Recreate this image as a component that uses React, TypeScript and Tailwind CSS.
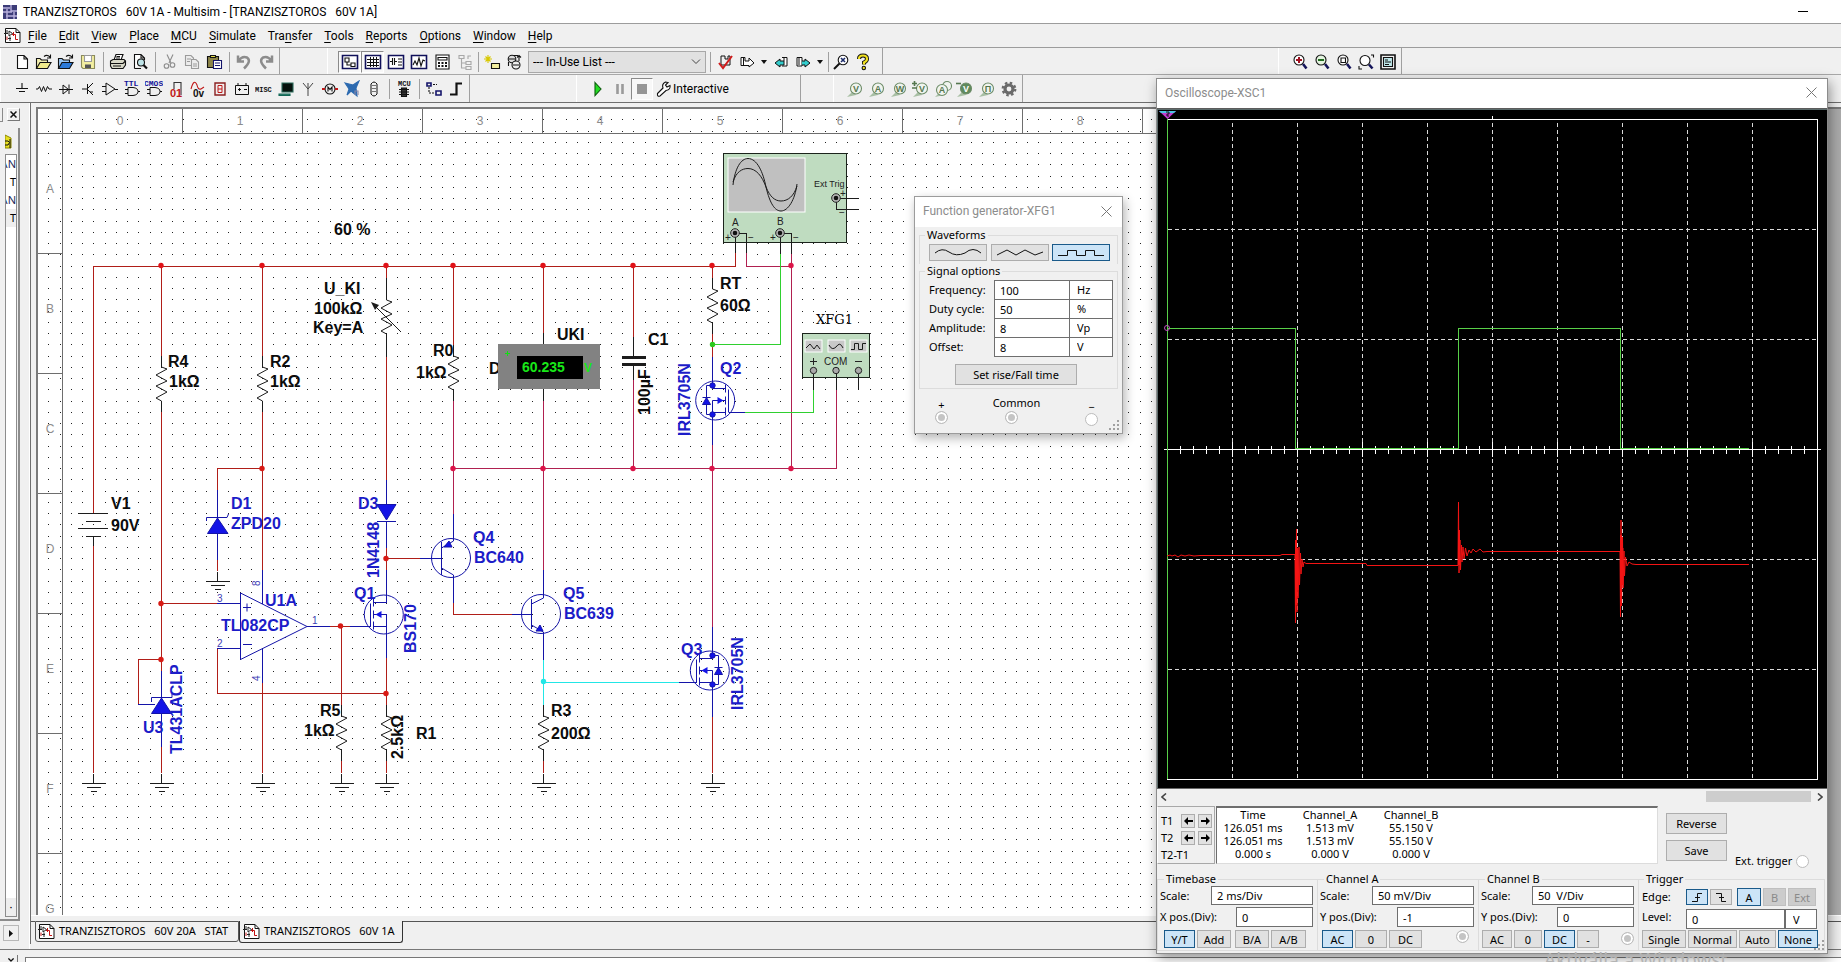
import React from "react";

type Kids = { children?: React.ReactNode };

const RED = "#b01e18";
const CRIM = "#b02050";
const GREEN = "#2fd02f";
const BLUE = "#1414a8";
const INK = "#1c1c1c";
const CYAN = "#22e6e6";

/* ---------- toolbar parts ---------- */

function Glyph({ children, size = 18 }: Kids & { size?: number }) {
  return (
    <svg width={size} height={size} viewBox="0 0 18 18" fill="none" stroke="#111" strokeWidth="1.1" aria-hidden="true">
      {children}
    </svg>
  );
}

function Tool({ label, children, pressed, wide }: Kids & { label: string; pressed?: boolean; wide?: boolean }) {
  return (
    <button
      type="button"
      aria-label={label}
      className={
        "flex h-[22px] flex-none items-center justify-center " +
        (wide ? "w-[23px] " : "w-[22px] ") +
        (pressed ? "border border-[#8a8a8a] border-r-white border-b-white bg-[#f8f8f8]" : "")
      }
    >
      <Glyph>{children}</Glyph>
    </button>
  );
}

function Sep({ tight }: { tight?: boolean }) {
  return <div className={"h-[20px] w-px flex-none bg-[#a0a0a0] " + (tight ? "ml-0.5 mr-px" : "ml-1 mr-[3px]")} />;
}

function Caret() {
  return (
    <button type="button" aria-label="More" className="flex h-[22px] w-[12px] flex-none items-center justify-center">
      <svg width="6" height="4" viewBox="0 0 6 4" aria-hidden="true">
        <path d="M0 0H6L3 4Z" fill="#111" />
      </svg>
    </button>
  );
}

function Band({ children, className }: Kids & { className: string }) {
  return (
    <div className={"flex flex-none items-center border-r border-l border-r-[#a0a0a0] border-l-white pl-[10px] " + className}>
      {children}
    </div>
  );
}

function SheetIcon({ size = 17 }: { size?: number }) {
  return (
    <svg width={size} height={size} viewBox="0 0 17 17" fill="none" className="flex-none" aria-hidden="true">
      <path d="M1.5 1.5H12L16 5.500V15.500H1.500Z" fill="#fff" stroke="#111" />
      <path d="M12 1.500V5.500H16" stroke="#111" />
      <path d="M0 6.500H4M5 4V9L8.500 6.500ZM4 11.500H7M6 9.500V14M3 3V6" stroke="#222" />
      <path d="M8 7.500H11.500V12.500H14M9.500 5V9M3 9.500V13" stroke="#c41414" />
    </svg>
  );
}

const menus: [string, string, string][] = [
  ["", "F", "ile"], ["", "E", "dit"], ["", "V", "iew"], ["", "P", "lace"], ["", "M", "CU"], ["", "S", "imulate"],
  ["Tra", "n", "sfer"], ["", "T", "ools"], ["", "R", "eports"], ["", "O", "ptions"], ["", "W", "indow"], ["", "H", "elp"],
];

function StandardTools() {
  return (
    <>
      <Band className="w-[280px] pt-0.5">
        <Tool label="New"><path d="M4.500 2.500H11L14.500 6V15.500H4.500ZM11 2.500V6H14.500" fill="#fff" /></Tool>
        <Tool label="Open">
          <path d="M1.500 15V5.500H5L6.500 7H12.500V9" fill="#f4f0b0" />
          <path d="M1.500 15.500L5 9.500H16L12.500 15.500Z" fill="#f2ec8c" />
          <path d="M9 3.500Q12 1 15 4M15.500 1.500V5H12" />
        </Tool>
        <Tool label="Open samples">
          <path d="M1.500 15V5.500H5L6.500 7H12.500V9" fill="#9cc8f4" />
          <path d="M1.500 15.500L5 9.500H16L12.500 15.500Z" fill="#2c7ad8" />
          <path d="M9 3.500Q12 1 15 4M15.500 1.500V5H12" />
        </Tool>
        <Tool label="Save">
          <path d="M2.500 2.500H15.500V15.500H4L2.500 14Z" fill="#f2eea0" stroke="#8a8a5a" />
          <path d="M5.500 2.500H12.500V8.500H5.500Z" fill="#fff" stroke="#999" />
          <path d="M6 11.500H12V15H6Z" fill="#555" stroke="none" />
        </Tool>
        <Sep />
        <Tool label="Print">
          <path d="M5 7L7 1.500H14L12 7" fill="#fff" />
          <path d="M1.500 8L4 6.500H15L16.500 8V12L14 15.500H3L1.500 13Z" fill="#d8d8c8" />
          <path d="M1.500 10.500H14L16.500 8M4 13H12M7.500 3.500H11M7 5H11" />
        </Tool>
        <Tool label="Print preview">
          <path d="M3.500 15.500V1.500H10L13.500 5V7M3.500 15.500H10M10 1.500V5H13.500" fill="#fff" />
          <circle cx="10" cy="9.500" r="3.500" fill="#bfe4e8" />
          <path d="M12.500 12L16 15.500" strokeWidth="2.200" />
        </Tool>
        <Sep />
        <Tool label="Cut">
          <g stroke="#8c8c8c"><path d="M6 1.500L10 10M12 1.500L8 10" /><circle cx="5.500" cy="13" r="2.300" /><circle cx="11.500" cy="12" r="2.300" /></g>
        </Tool>
        <Tool label="Copy">
          <g stroke="#9a9a9a" fill="#ececec"><path d="M2.500 2.500H8L10.500 5V12.500H2.500Z" /><path d="M8.500 6.500H13L15.500 9V15.500H8.500Z" /><path d="M4 6H8M4 8.500H7M10 11H14M10 13H14" /></g>
        </Tool>
        <Tool label="Paste">
          <path d="M2.500 3.500H13.500V14.500H2.500Z" fill="#8c8448" /><path d="M5.500 4.500V2.500H10.500V4.500Z" fill="#e8e04a" />
          <path d="M8.500 7.500H16.500V15.500H8.500Z" fill="#fff" stroke="#14146a" /><path d="M10 10H15M10 12.500H15" stroke="#14146a" />
        </Tool>
        <Sep />
        <Tool label="Undo"><path d="M3 2.500V8.500H9M3.500 8Q7 2.500 12 4.500Q17 8 9 15.500" stroke="#8c8c8c" strokeWidth="2.500" /></Tool>
        <Tool label="Redo"><path d="M15 2.500V8.500H9M14.500 8Q11 2.500 6 4.500Q1 8 9 15.500" stroke="#8c8c8c" strokeWidth="2.500" /></Tool>
      </Band>
      <Band className="ml-[47px] w-[556px] pt-0.5">
        <Tool wide pressed label="Design toolbox"><path d="M1.500 2.500H16.500V15.500H1.500Z" fill="#fff" stroke="#10105a" strokeWidth="1.600" /><path d="M4 5H8V9H4ZM10 10H14V13.500H10ZM6 9V12H10" /></Tool>
        <Tool wide pressed label="Spreadsheet view"><path d="M1.500 2.500H16.500V15.500H1.500Z" fill="#fff" stroke="#10105a" strokeWidth="1.600" /><path d="M3 6.500H15M3 9.500H15M3 12.500H15M6.500 4V14M9.500 4V14M12.500 4V14" strokeWidth="1" /></Tool>
        <Tool wide label="SPICE netlist"><path d="M1.500 2.500H16.500V15.500H1.500Z" fill="#fff" stroke="#10105a" strokeWidth="1.600" /><path d="M3 8.500H5M5.500 5V12M7.500 5V12M8 8.500H10M11 6H15M11 9H15M11 12H15" /></Tool>
        <Tool wide label="Grapher"><path d="M1.500 2.500H16.500V15.500H1.500Z" fill="#fff" stroke="#10105a" strokeWidth="1.600" /><path d="M3 12L5 8L7 12L9 5L11 13L13 7L15 8" /></Tool>
        <Tool wide label="Postprocessor"><path d="M3 2H16V16H3Z" fill="#fff" /><path d="M5 4.500H14V7H5Z" /><path d="M5 10H7M8.500 10H10.500M12 10H14M5 13H7M8.500 13H10.500M12 13H14" strokeWidth="1.800" /></Tool>
        <Tool wide label="Parent sheet"><g stroke="#a8a8a8"><path d="M3 2.500H8V5.500H3ZM10 8.500H15V11.500H10ZM10 13.500H15V16.500H10ZM5.500 6V15H10M5.500 10H10M12 6V3H15" /></g></Tool>
        <Sep tight />
        <Tool wide label="Component wizard"><path d="M5 2V10M1 6H9M2.500 3.500L7.500 8.500M7.500 3.500L2.500 8.500" stroke="#d8c800" /><path d="M8.500 10.500H16.500V15.500H8.500Z" fill="#f2eea0" /></Tool>
        <Tool wide label="Database manager"><circle cx="6" cy="6" r="3.800" fill="#ddd" /><circle cx="10" cy="12" r="4" fill="#eee" /><path d="M3 6H9M7 12H13M13 8V3M11 4.500L13 2.500L15 4.500M2.500 9V13M8 2.500H12" /></Tool>
        <select aria-label="In-use list" className="ml-[2px] h-[22px] w-[178px] flex-none appearance-none border border-[#a8a8a8] bg-[#e1e1e1] pl-1 font-['Roboto',sans-serif] text-[12px] leading-5 text-black">
          <option>--- In-Use List ---</option>
        </select>
        <div className="pointer-events-none -ml-[15px] mr-[5px] flex w-[10px] flex-none items-center">
          <svg width="10" height="6" viewBox="0 0 10 6" fill="none" stroke="#444" aria-hidden="true"><path d="M1 .5L5 4.500L9 .5" /></svg>
        </div>
        <Sep />
        <Tool label="Electrical rules check"><path d="M5 3H9V6H12V3H14V12H5Z" strokeWidth="1" /><path d="M3 10L7 15L16 3" stroke="#d01c1c" strokeWidth="2" /></Tool>
        <Tool label="Transfer to layout"><path d="M3 4.500H7V8H11V5L16 10L11 14V12.500H3ZM5.500 4V12" strokeWidth="1" fill="#fff" /></Tool>
        <Caret />
        <Tool label="Back annotate"><path d="M10 4.500H15V13H10" fill="#fff" strokeWidth="1" /><path d="M12 4V12H8V14L3 10L8 6V8H12" strokeWidth="1" fill="#3cc" /></Tool>
        <Tool label="Forward annotate"><path d="M3 4.500H8V13H3Z" fill="#fff" strokeWidth="1" /><path d="M5 4V12M8 8H11V6L16 10L11 14V12H8" strokeWidth="1" fill="#3cc" /></Tool>
        <Caret />
        <Sep tight />
        <Tool label="Find examples"><circle cx="11" cy="7" r="4.800" fill="#fff" /><path d="M9 5L13 9M13 5L9 9" stroke="#1c2c6a" strokeWidth="1.600" /><path d="M7.500 10.500L2 16" strokeWidth="2" /></Tool>
        <Tool label="Help">
          <path d="M5 6Q5 2.500 9 2.500Q13 2.500 13 6Q13 8 10 9.500V11.500" strokeWidth="4" /><path d="M5 6Q5 2.500 9 2.500Q13 2.500 13 6Q13 8 10 9.500V11.500" stroke="#f0e020" strokeWidth="2.200" />
          <circle cx="9.800" cy="15" r="1.700" fill="#f0e020" />
        </Tool>
      </Band>
      <Band className="ml-[395px] w-[124px] pt-0.5">
        <Tool label="Zoom in"><circle cx="8" cy="7" r="5" fill="#fff" /><path d="M5 7H11M8 4V10" stroke="#a01020" strokeWidth="2" /><path d="M12 11L15.500 15.500" stroke="#14145a" strokeWidth="2.600" /></Tool>
        <Tool label="Zoom out"><circle cx="8" cy="7" r="5" fill="#e4f4e0" /><path d="M5 7H11" stroke="#206a20" strokeWidth="2" /><path d="M12 11L15.500 15.500" stroke="#14145a" strokeWidth="2.600" /></Tool>
        <Tool label="Zoom area"><circle cx="8" cy="7" r="5" fill="#fff" /><path d="M6 5H10.500V9.500H6Z" /><path d="M12 11L15.500 15.500" stroke="#14145a" strokeWidth="2.600" /></Tool>
        <Tool label="Zoom sheet"><circle cx="8" cy="7.500" r="5" fill="#fff" /><path d="M14 2H16.500V4.500M2 13V16H5" /><path d="M12 11.500L15.500 15.500" stroke="#14145a" strokeWidth="2.600" /></Tool>
        <Tool label="Full screen"><path d="M2 2H16V16H2Z" strokeWidth="1.600" /><path d="M4.500 4.500H13.500V13.500H4.500Z" fill="#bfe8ea" /><path d="M6 7H9M6 9H12M6 11.500H10" /></Tool>
      </Band>
    </>
  );
}

function Probe({ label, mark, solid, second, sign }: { label: string; mark: string; solid?: boolean; second?: boolean; sign?: string }) {
  return (
    <Tool label={label}>
      <path d="M1 17L7 11L10 15Z" fill="#a8bfa4" stroke="none" />
      {second && <circle cx="13" cy="6" r="4.500" fill="#f0f4ee" stroke="#6d8c68" />}
      <circle cx={second ? 8 : 10} cy={second ? 10 : 8.5} r="5.500" fill={solid ? "#5f8a5c" : "#f0f4ee"} stroke="#6d8c68" />
      <text x={second ? 8 : 10} y={second ? 13 : 11.5} textAnchor="middle" stroke="none" fill={solid ? "#fff" : "#55774f"} className="font-['Liberation_Sans',sans-serif] text-[9px] font-bold">{mark}</text>
      {sign && <path d={sign} stroke="#55774f" strokeWidth="1.600" />}
    </Tool>
  );
}

function ComponentTools() {
  return (
    <>
      <Band className="w-[470px]">
        <Tool label="Source"><path d="M9 3V8M3 8.500H15M6 11.500H12" /></Tool>
        <Tool label="Basic"><path d="M1 9H3L4.500 6.500L6.500 11.500L8.500 6.500L10.500 11.500L12.500 6.500L14 9H17" strokeWidth="1" /></Tool>
        <Tool label="Diode"><path d="M2 9.500H16M6 5V14L11.500 9.500ZM12 4.500V14" strokeWidth="1" /></Tool>
        <Tool label="Transistor"><path d="M3 9H8M8.500 4V14M9 8L14 3M9 10L14 15M11 12H14" strokeWidth="1" /></Tool>
        <Tool label="Analog"><path d="M5 3V15L14 9ZM1 6.500H5M1 11.500H5M14 9.500H17" strokeWidth="1" /></Tool>
        <Tool label="TTL"><text x="1" y="5.500" stroke="none" fill="#14149a" className="font-['Liberation_Mono',monospace] text-[8px] font-bold">TTL</text><path d="M5 7.500H10Q15 8 15 11.500Q15 15 10 15.500H5ZM2 9.500H5M2 13.500H5M15 11.500H17" strokeWidth="1" /></Tool>
        <Tool label="CMOS"><text x="-1" y="5.500" stroke="none" fill="#14149a" className="font-['Liberation_Mono',monospace] text-[8px] font-bold">CMOS</text><path d="M5 7.500H10Q15 8 15 11.500Q15 15 10 15.500H5ZM2 9.500H5M2 13.500H5M15 11.500H17" strokeWidth="1" /></Tool>
        <Tool label="Misc digital"><path d="M7 9V2.500H14V15" stroke="#333" /><text x="3" y="17" stroke="none" fill="#c01818" className="font-['Liberation_Sans',sans-serif] text-[11px] font-bold">01</text></Tool>
        <Tool label="Mixed"><path d="M2 9Q5 -2 8 5Q9 10 12 9L15 7" stroke="#c01818" /><text x="4" y="17" stroke="none" fill="#111" className="font-['Liberation_Sans',sans-serif] text-[10px] font-bold">0v</text></Tool>
        <Tool label="Indicator"><path d="M4 3H14V15H4Z" stroke="#8a2020" strokeWidth="1.400" /><path d="M7 5.500H11V12.500H7ZM7 9H11" stroke="#c01818" strokeWidth="1" /></Tool>
        <Tool label="Power component"><path d="M2.500 5.500H15.500V14.500H2.500ZM5 3V5M13 3V5M5 9.500H8M11 9.500H14M6.500 8V11" strokeWidth="1" /></Tool>
        <Tool label="Miscellaneous"><text x="0" y="11.500" stroke="none" fill="#111" className="font-['Liberation_Mono',monospace] text-[7px] font-bold">MISC</text></Tool>
        <Tool label="Advanced peripherals"><path d="M5 3H16V12H5Z" fill="#05110c" stroke="#2a6a5a" /><path d="M2 14H13V15.500H2Z" fill="#3c8a78" stroke="#165" /></Tool>
        <Tool label="RF"><path d="M9 3V16M4 3L9 9L14 3" stroke="#444" strokeWidth="1" /></Tool>
        <Tool label="Electromechanical"><circle cx="9" cy="9" r="5" /><path d="M1 9H4M14 9H17" stroke="#c01818" strokeWidth="2" /><path d="M7 11.500V7L9 9.500L11 7V11.500" /></Tool>
        <Tool label="NI components"><path d="M2 3L10 5L16 1L13 8L14 16L8 11L4 15L6 9Z" fill="#2c6ab0" stroke="#2c6ab0" /><path d="M12 15V11H15V15" stroke="#88a" /></Tool>
        <Tool label="Connector"><path d="M6 4Q9 0 12 4V14Q9 18 6 14Z" strokeWidth="1" /><path d="M8 5V13M10 5V13" strokeDasharray="1 2" /></Tool>
        <Sep />
        <Tool label="MCU"><text x="3" y="6" stroke="none" fill="#111" className="font-['Liberation_Mono',monospace] text-[7px] font-bold">MCU</text><path d="M6.500 8H11.500V16.500H6.500Z" fill="#333" /><path d="M4 9.500H14M4 12H14M4 14.500H14" /></Tool>
        <Sep />
        <Tool label="Hierarchical block"><path d="M2 3H6V6H2ZM11 11H16V15H11Z" stroke="#14146a" strokeWidth="1.600" /><path d="M4 7V13H10M8 4.500H12" strokeDasharray="2 1" /></Tool>
        <Tool label="Bus"><path d="M3 14.500H9.500V3.500H15" strokeWidth="2.200" /></Tool>
      </Band>
      <Band className="ml-[106px] w-[225px]">
        <Tool label="Run"><path d="M6 2.500L12 9L6 15.500Z" fill="#22dd22" stroke="#0a5a0a" /></Tool>
        <Tool label="Pause"><path d="M6.500 4V14M11.500 4V14" stroke="#9a9a9a" strokeWidth="2.600" /></Tool>
        <Tool label="Stop" pressed><path d="M4 4H14V14H4Z" fill="#969696" stroke="none" /></Tool>
        <button type="button" className="ml-0.5 flex items-center font-['Roboto',sans-serif] text-[12px] text-black">
          <Glyph><path d="M2.500 13.500L8 8Q6.500 4 10.500 2L13 2.500L10.500 5L12 7L15 5.500Q16 9.500 11 10.500L5 16Q2 17 2.500 13.500Z" fill="#fff" /></Glyph>
          <span>Interactive</span>
        </button>
      </Band>
      <Band className="ml-8 w-[190px]">
        <Probe label="Voltage probe" mark="V" />
        <Probe label="Current probe" mark="A" />
        <Probe label="Power probe" mark="W" />
        <Probe label="Differential probe" mark="V" sign="M0 3.500H5M2.500 1V6M0 8H5" />
        <Probe label="Voltage and current probe" mark="A" second />
        <Probe label="Voltage reference probe" mark="V" solid sign="M0 3.500H5" />
        <Probe label="Digital probe" mark="Π" />
        <Tool label="Probe settings"><circle cx="9" cy="9" r="4" stroke="#6a6a6a" strokeWidth="3.200" /><circle cx="9" cy="9" r="6.300" stroke="#6a6a6a" strokeWidth="2.200" strokeDasharray="2.500 2.450" /></Tool>
      </Band>
    </>
  );
}

/* ---------- schematic ---------- */

function Wire({ c, d }: { c: string; d: string }) {
  return <path d={d} fill="none" stroke={c} shapeRendering="crispEdges" />;
}

function Dot({ x, y, c }: { x: number; y: number; c: string }) {
  return <circle cx={x} cy={y} r="2.700" fill={c} />;
}

function Resistor({ x, y }: { x: number; y: number }) {
  return (
    <g fill="none" stroke={INK}>
      <path d={`M${x} ${y - 11}V${y}L${x + 5.500} ${y + 2}L${x - 5.500} ${y + 8}L${x + 5.500} ${y + 14}L${x - 5.500} ${y + 19}L${x + 5.500} ${y + 25}L${x - 5.500} ${y + 31}L${x} ${y + 34}V${y + 45}`} />
    </g>
  );
}

function Ground({ x, y }: { x: number; y: number }) {
  return <Wire c={INK} d={`M${x} ${y - 10}V${y}M${x - 12} ${y}H${x + 12}M${x - 7} ${y + 4}H${x + 7}M${x - 3} ${y + 8}H${x + 3}`} />;
}

function Mosfet({ x, y, flip, diode = true }: { x: number; y: number; flip?: boolean; diode?: boolean }) {
  return (
    <g transform={`translate(${x} ${y})${flip ? " scale(-1 1)" : ""}`} fill="none" stroke={BLUE}>
      <circle cx="2.700" cy="0" r="19.500" />
      <path d="M13 -16V-8M13 -4V4M13 7V15M16 -11V12M0 -16V-12H13M0 12H13M0 0H13M0 0V16" />
      <path d="M5 -3.500V3.500L11 0Z" fill="#1414e6" stroke="none" />
      {diode && (
        <>
          <path d="M0 -15H-6V14H0M-10 -3H-2" />
          <path d="M-10 4H-2L-6 -3Z" fill="#1414e6" />
          <Dot x={0} y={-15} c="#1414e6" />
          <Dot x={0} y={14} c="#1414e6" />
        </>
      )}
    </g>
  );
}

type Label = { t: string; x: number; y: number; blue?: boolean; up?: boolean };

const labels: Label[] = [
  { t: "60 %", x: 334, y: 235 },
  { t: "U_KI", x: 324, y: 294 },
  { t: "100kΩ", x: 314, y: 314 },
  { t: "Key=A", x: 313, y: 333 },
  { t: "R4", x: 168, y: 367 },
  { t: "1kΩ", x: 169, y: 387 },
  { t: "R2", x: 270, y: 367 },
  { t: "1kΩ", x: 270, y: 387 },
  { t: "R0", x: 433, y: 356 },
  { t: "1kΩ", x: 416, y: 378 },
  { t: "UKI", x: 557, y: 340 },
  { t: "D", x: 489, y: 374 },
  { t: "C1", x: 648, y: 345 },
  { t: "100µF", x: 650, y: 415, up: true },
  { t: "RT", x: 720, y: 289 },
  { t: "60Ω", x: 720, y: 311 },
  { t: "V1", x: 111, y: 509 },
  { t: "90V", x: 111, y: 531 },
  { t: "R5", x: 320, y: 716 },
  { t: "1kΩ", x: 304, y: 736 },
  { t: "2.5kΩ", x: 403, y: 759, up: true },
  { t: "R1", x: 416, y: 739 },
  { t: "R3", x: 551, y: 716 },
  { t: "200Ω", x: 551, y: 739 },
  { t: "D1", x: 231, y: 509, blue: true },
  { t: "ZPD20", x: 231, y: 529, blue: true },
  { t: "D3", x: 358, y: 509, blue: true },
  { t: "1N4148", x: 379, y: 578, blue: true, up: true },
  { t: "Q1", x: 354, y: 599, blue: true },
  { t: "BS170", x: 416, y: 653, blue: true, up: true },
  { t: "U1A", x: 265, y: 606, blue: true },
  { t: "TL082CP", x: 221, y: 631, blue: true },
  { t: "U3", x: 143, y: 733, blue: true },
  { t: "TL431ACLP", x: 182, y: 754, blue: true, up: true },
  { t: "Q4", x: 473, y: 543, blue: true },
  { t: "BC640", x: 474, y: 563, blue: true },
  { t: "Q5", x: 563, y: 599, blue: true },
  { t: "BC639", x: 564, y: 619, blue: true },
  { t: "Q2", x: 720, y: 374, blue: true },
  { t: "IRL3705N", x: 690, y: 436, blue: true, up: true },
  { t: "Q3", x: 681, y: 655, blue: true },
  { t: "IRL3705N", x: 743, y: 710, blue: true, up: true },
];

const pins: Label[] = [
  { t: "3", x: 217, y: 602 },
  { t: "2", x: 217, y: 647 },
  { t: "1", x: 312, y: 624 },
  { t: "8", x: 260, y: 586, up: true },
  { t: "4", x: 260, y: 681, up: true },
];

function Terminal({ x, y }: { x: number; y: number }) {
  return (
    <g>
      <circle cx={x} cy={y} r="4.300" fill="#b8b8b8" stroke="#222" />
      <circle cx={x} cy={y} r="2.300" fill="#111" />
    </g>
  );
}

const rulerCols = [0, 1, 2, 3, 4, 5, 6, 7, 8, 9];
const rulerRows = ["A", "B", "C", "D", "E", "F", "G"];
const dotX = [10, 22, 33, 44];
const dotY = [10, 22, 33, 44];

function Schematic() {
  return (
    <svg width="1776" height="806" viewBox="38 109 1776 806" className="block flex-none font-['Liberation_Sans',sans-serif]" role="img" aria-label="Transistor regulator schematic">
      <defs>
        <pattern id="dots" x="38" y="109" width="45" height="45" patternUnits="userSpaceOnUse">
          {dotY.map((y) => dotX.map((x) => <rect key={`${x}-${y}`} x={x} y={y} width="1" height="1" fill="#222" />))}
        </pattern>
      </defs>
      <rect x="38" y="109" width="1776" height="806" fill="#fff" />
      <rect x="38" y="109" width="1776" height="806" fill="url(#dots)" />

      {/* ruler */}
      <Wire c="#6e6e6e" d="M38 133.500H1814M62.500 109V915" />
      {rulerCols.map((n) => (
        <g key={n}>
          <Wire c="#6e6e6e" d={`M${182.500 + n * 120} 109V133`} />
          <text x={120 + n * 120} y="125" textAnchor="middle" fill="#8c8c8c" fontSize="12">{n}</text>
        </g>
      ))}
      {rulerRows.map((r, i) => (
        <g key={r}>
          <Wire c="#6e6e6e" d={`M38 ${253.500 + i * 120}H62`} />
          <text x="50" y={193 + i * 120} textAnchor="middle" fill="#8c8c8c" fontSize="12">{r}</text>
        </g>
      ))}

      {/* supply and signal nets */}
      <Wire c={RED} d="M93.500 513V266.500H735.500V253M161.500 266V356M262.500 266V356M386.500 266V278M453.500 266V345M543.500 266V333M633.500 266V337M712.500 266V278" />
      <Wire c={RED} d="M161.500 412V672M262.500 412V570M386.500 357V480M93.500 546V773M262.500 468.500H217.500V490M217.500 560V571M161.500 603.500H217M217.500 648V693.500H386.500M161 659.500H138.500V704M386.500 532V570M386 558.500H420M330 626.500H350M341.500 626V705M386.500 658V705M262.500 683V773M161.500 747V773M341.500 761V773M386.500 761V773M543.500 761V773M712.500 717V773M712.500 333V357M453.500 603V614.500H512" />
      {/* common net */}
      <Wire c={CRIM} d="M453.500 514V401M453 468.500H836.500V389M543.500 401V570M633.500 380V468M712.500 445V627M746.500 253V266.500H791.500M791.500 254V468" />
      <Wire c={GREEN} d="M780.500 254V344.500H712M745 412.500H813.500V390" />
      <Wire c={CYAN} d="M543.500 660V705M543 682.500H679" />
      {/* device leads */}
      <Wire c={BLUE} d="M386.500 480V504M386.500 521V548M386.500 570V603M217.500 490V560M217 603.500H240M217 648.500H240M262.500 570V604M262.500 649V683M307 626.500H330M350 626.500H371M386.500 614V658M161.500 671V747M138 704.500H155M453.500 514V541M420 558.500H441M453.500 575V603M512 614.500H531M543.500 570V598M543.500 632V660M712.500 357V386M712.500 415V445M729 412.500H745M712.500 627V656M712.500 685V717M679 682.500H697" />
      <Wire c={INK} d="M386.500 278V300M386.500 333V357M543.500 333V345M543.500 389V401M633.500 337V356M633.500 366V380M78 513.500H108M86 521.500H101M78 528.500H108M86 536.500H101M93.500 537V546M836.500 372V390M813.500 372V390M858.500 372V389" />

      {[161.500, 262.500, 386.500, 453.500, 543.500, 633.500, 712.500].map((x) => <Dot key={x} x={x - 0.500} y={265.500} c="#e01218" />)}
      {[[262, 468.500], [386, 558.500], [161, 603.500], [161, 659.500], [340.500, 626], [386, 693.500]].map(([x, y]) => <Dot key={`${x}-${y}`} x={x} y={y} c="#d81a14" />)}
      {[[453, 468.500], [543, 468.500], [633, 468.500], [712, 468.500], [791, 468.500], [791, 265.500]].map(([x, y]) => <Dot key={`${x}-${y}`} x={x} y={y} c="#dc1448" />)}
      <Dot x={712.500} y={344.500} c="#2cc81c" />
      <Dot x={543.500} y={681.500} c={CYAN} />

      <Resistor x={161.500} y={367} />
      <Resistor x={262.500} y={367} />
      <Resistor x={453.500} y={356} />
      <Resistor x={712.500} y={289} />
      <Resistor x={341.500} y={716} />
      <Resistor x={386.500} y={716} />
      <Resistor x={543.500} y={716} />
      <Resistor x={386.500} y={300} />
      <path d="M372 303L401 332" stroke={INK} />
      <path d="M371 302L379 305L375 310Z" fill={INK} />
      <path d="M622 357.500H646M622 364.500H646" stroke={INK} strokeWidth="3" />

      {[93.500, 161.500, 262.500, 341.500, 386.500, 543.500, 712.500].map((x) => <Ground key={x} x={x} y={783.500} />)}
      <Ground x={217.500} y={581.500} />

      {/* diodes */}
      <g fill="#1414e6" stroke={BLUE}>
        <path d="M217.500 518L228 533.500H207.500Z" />
        <path d="M206.500 521V517.500H227L228.500 514" fill="none" />
        <path d="M161.500 698L171.500 713.500H151.500Z" />
        <path d="M151.500 702V697.500H172V694" fill="none" />
        <path d="M377 504.500H396L386.500 520Z" />
        <path d="M377 521.500H396" />
      </g>

      {/* op-amp */}
      <path d="M240.500 593V659.500L307 626.500Z" fill="none" stroke={BLUE} />
      <path d="M243 607.500H251M247 603.500V611.500M243 644.500H252" stroke={BLUE} />

      <Mosfet x={712.500} y={400.500} />
      <Mosfet x={712.500} y={670.500} flip />
      <Mosfet x={386.500} y={614.500} flip diode={false} />

      {/* bipolar transistors */}
      <g fill="none" stroke={BLUE}>
        <circle cx="451" cy="558" r="19.500" />
        <path d="M441.500 542V575M453.500 541L441.500 548M441.500 568L453.500 575" />
        <path d="M444 547L449 541L452 547Z" fill="#1414e6" />
        <circle cx="541" cy="614" r="19.500" />
        <path d="M531.500 599V629M543.500 598L531.500 604M531.500 625L543.500 632" />
        <path d="M536 631L540 625L543 631Z" fill="#1414e6" />
      </g>

      {labels.map((l) => (
        <text key={`${l.t}-${l.x}-${l.y}`} x={l.x} y={l.y} transform={l.up ? `rotate(-90 ${l.x} ${l.y})` : undefined} fill={l.blue ? "#1c1cc8" : "#0c0c0c"} fontSize="16" fontWeight="bold">{l.t}</text>
      ))}
      {pins.map((l) => (
        <text key={l.t} x={l.x} y={l.y} transform={l.up ? `rotate(-90 ${l.x} ${l.y})` : undefined} fill="#3c3cb4" fontSize="10">{l.t}</text>
      ))}

      {/* voltmeter */}
      <rect x="498" y="344" width="102" height="45" fill="#828282" />
      <rect x="517" y="356" width="66" height="23" fill="#000" />
      <path d="M505 353.500H510M507.500 351V356" stroke="#12e012" />
      <g fill="#18e818" fontSize="14" fontWeight="bold">
        <text x="522" y="372">60.235</text>
        <text x="584" y="372" fontSize="12">V</text>
      </g>

      {/* oscilloscope symbol */}
      <rect x="723.500" y="153.500" width="123" height="89" fill="#bfdcc0" stroke="#1c241c" />
      <rect x="728" y="158" width="77" height="54" fill="#c0c0c0" stroke="#fff" />
      <path d="M733 185C735 168 741 158.500 748 158.500C757 158.500 763 172 766 187C770 204 775 211 781 211C788 211 795 200 797 184" fill="none" stroke={INK} />
      <path d="M733 182C736 172 742 168.500 748 168.500C756 168.500 762 176 766 187C770 197 775 201 781 201C788 201 794 196 797 186" fill="none" stroke={INK} />
      <g fill="#222" fontSize="10">
        <text x="814" y="187" fontSize="9">Ext Trig</text>
        <text x="732" y="226">A</text>
        <text x="777" y="225">B</text>
        <text x="725" y="241">+</text>
        <text x="748" y="241">−</text>
        <text x="770" y="241">+</text>
        <text x="793" y="241">−</text>
        <text x="840" y="197">+</text>
        <text x="839" y="216">−</text>
      </g>
      <Wire c={INK} d="M836 198.500H859M836.500 200V209.500H859M735.500 235V253M738 233.500H746.500V253M780.500 235V254M783 233.500H791.500V254" />
      <Terminal x={735} y={233} />
      <Terminal x={780} y={233} />
      <Terminal x={836} y={198} />

      {/* function generator symbol */}
      <text x="816" y="324" fill="#000" className="font-['DejaVu_Serif',serif] text-[13px]">XFG1</text>
      <rect x="802.500" y="333.500" width="67" height="44" fill="#bfdcc0" stroke="#1c241c" />
      <g fill="#c8c8c8" stroke="#fff">
        <rect x="805" y="340" width="17" height="12" />
        <rect x="828" y="340" width="17" height="12" />
        <rect x="850" y="340" width="17" height="12" />
      </g>
      <g fill="none" stroke={INK}>
        <path d="M806 348L810 344L814 349L817 345L820 349" />
        <path d="M829 345Q832 351 836 347Q840 341 843 348" />
        <path d="M851 349.500H854.500V343.500H858.500V349.500H862.500V343.500H866" />
      </g>
      <text x="824" y="365" fill="#222" fontSize="10">COM</text>
      <path d="M810 361.500H817M813.500 358V365M855 361.500H862" stroke="#222" />
      {[813.500, 836, 858.500].map((x) => <circle key={x} cx={x} cy="370.500" r="3.200" fill="#aaa" stroke="#222" />)}
      <Wire c={INK} d="M813.500 374V390M836.500 374V389M858.500 374V389" />
    </svg>
  );
}

/* ---------- instrument windows ---------- */

const btn = "flex items-center justify-center border text-[11px] leading-none ";
const btnOff = btn + "border-[#adadad] bg-[#e1e1e1] text-black ";
const btnOn = btn + "border-[#1a5a8a] bg-[#cce4f7] text-black ";
const btnDead = btn + "border-[#bfbfbf] bg-[#cccccc] text-[#8a8a8a] ";
const field = "block min-w-0 border border-[#6e6e6e] bg-white text-[11px] leading-none text-black outline-none ";
const radio = "size-[13px] flex-none appearance-none rounded-full border border-[#bcbcbc] bg-white checked:bg-[#c4c4c4] checked:shadow-[inset_0_0_0_2px_#fff] ";

function WindowTitle({ title, className }: { title: string; className: string }) {
  return (
    <div className={"flex flex-none items-center justify-between bg-white pr-[10px] pb-0.5 pl-2 font-['Roboto',sans-serif] text-[12px] text-[#8c8c8c] " + className}>
      <h2>{title}</h2>
      <button type="button" aria-label={`Close ${title}`}>
        <svg width="11" height="11" viewBox="0 0 11 11" fill="none" stroke="#777" aria-hidden="true"><path d="M.5 .5L10.500 10.500M10.500 .5L.5 10.500" /></svg>
      </button>
    </div>
  );
}

function Grip() {
  return (
    <svg width="11" height="11" viewBox="0 0 11 11" className="absolute right-0.5 bottom-0.5" fill="#a0a0a0" aria-hidden="true">
      <path d="M8 0h2v2h-2zM8 4h2v2h-2zM4 4h2v2h-2zM8 8h2v2h-2zM4 8h2v2h-2zM0 8h2v2h-2z" />
    </svg>
  );
}

const genRows: [string, string, string][] = [
  ["Frequency:", "100", "Hz"],
  ["Duty cycle:", "50", "%"],
  ["Amplitude:", "8", "Vp"],
  ["Offset:", "8", "V"],
];

function FunctionGenerator() {
  return (
    <section className="absolute top-[196px] left-[914px] flex h-[238px] w-[209px] flex-col border border-[#9c9c9c] bg-[#f0f0f0] text-[11px] leading-[14px] text-black shadow-[2px_4px_10px_rgba(0,0,0,0.3)]">
      <WindowTitle title="Function generator-XFG1" className="h-[30px]" />
      <div className="mx-1 flex flex-col pt-px">
        <fieldset className="border border-b-0 border-[#dcdcdc] pr-[7px] pl-[9px]">
          <legend className="-ml-1 px-0.5">Waveforms</legend>
          <div className="flex h-[22px] items-start justify-between pt-0.5">
            <button type="button" aria-label="Sine" className={btnOff + "h-[17px] w-[58px]"}><svg width="46" height="8" viewBox="0 0 46 8" fill="none" stroke="#111"><path d="M0 4Q7 -2 14 3T30 4Q38 -3 46 4" /></svg></button>
            <button type="button" aria-label="Triangle" className={btnOff + "h-[17px] w-[58px]"}><svg width="46" height="8" viewBox="0 0 46 8" fill="none" stroke="#111"><path d="M0 6L10 1L19 6L28 1L38 6L46 3" /></svg></button>
            <button type="button" aria-label="Square" className={btnOn + "h-[17px] w-[58px]"}><svg width="46" height="8" viewBox="0 0 46 8" fill="none" stroke="#111"><path d="M0 6.500H9.500V1.500H18.500V6.500H27.500V1.500H36.500V6.500H46" /></svg></button>
          </div>
        </fieldset>
        <fieldset className="h-[125px] border border-[#dcdcdc] pr-[3px] pl-[9px]">
          <legend className="-ml-1 px-0.5">Signal options</legend>
          <div className="flex flex-col pt-0.5">
            {genRows.map(([name, value, unit]) => (
              <div key={name} className="-mb-px flex h-[20px] items-stretch">
                <label htmlFor={name} className="flex w-[65px] items-center">{name}</label>
                <input id={name} defaultValue={value} className={field + "w-[76px] pl-[5px]"} />
                <input aria-label={`${name} unit`} defaultValue={unit} className={field + "-ml-px w-[44px] pb-0.5 pl-[7px]"} />
              </div>
            ))}
          </div>
          <button type="button" className={btnOff + "mt-2 ml-[26px] h-[21px] w-[122px]"}>Set rise/Fall time</button>
        </fieldset>
      </div>
      <div className="flex items-start justify-between px-5 pt-[7px] leading-[13px]">
        <label className="mt-0.5 flex flex-col items-center">+<input type="radio" defaultChecked name="plus" className={radio} /></label>
        <label className="flex flex-col items-center">Common<input type="radio" defaultChecked name="common" className={radio + "mt-0.5 mr-[10px]"} /></label>
        <label className="mt-1 mr-1 flex flex-col items-center">−<input type="radio" name="minus" className={radio} /></label>
      </div>
      <Grip />
    </section>
  );
}

function ScopeScreen() {
  const v = [1, 2, 3, 4, 5, 6, 7, 8, 9];
  const ticks = Array.from({ length: 51 }, (_, i) => i);
  return (
    <svg width="670" height="679" viewBox="1157 109 670 679" className="block w-full flex-none bg-black" fill="none" role="img" aria-label="Oscilloscope trace">
      <path d="M1157 109.500H1827M1157.500 109V788" stroke="#5c6c6c" shapeRendering="crispEdges" />
      <g stroke="#d8d8d8" strokeDasharray="4 3" shapeRendering="crispEdges">
        {v.map((i) => <path key={i} d={`M${1167.500 + i * 65} 123V779`} />)}
        {[229.500, 339.500, 559.500, 669.500].map((y) => <path key={y} d={`M1168 ${y}H1817`} />)}
      </g>
      <path d="M1167 119.500H1817.500V779.500H1167M1492.500 116V119M1164 449.500H1821" stroke="#fff" shapeRendering="crispEdges" />
      <path d={ticks.map((i) => `M${1167.500 + i * 13} ${i % 5 ? 446 : 442}V${i % 5 ? 454 : 457}`).join("")} stroke="#fff" shapeRendering="crispEdges" />
      <path d="M1167.500 119V779" stroke="#58d048" shapeRendering="crispEdges" />
      <path d="M1167 328.500H1295.500V448.500H1458.500V328.500H1620.500V448.500H1749" stroke="#58d048" shapeRendering="crispEdges" />
      <path d="M1167 556L1170 555L1172 556L1175 555L1178 557L1181 555L1185 556L1189 555L1194 556L1200 555.500H1280L1282 554.500H1295L1295.500 623L1296.500 529L1297 612L1297.500 548L1298 598L1299 547L1299.500 585L1300.500 553L1301 574L1302 559L1303 567L1304 562L1306 563.500H1366L1367 565.500H1458L1458.500 502L1459 573L1460 540L1460.500 570L1461.500 545L1462 562L1463 547L1464 559L1465.500 548L1467 556L1469 550L1471 553L1473 549L1476 552L1480 549L1483 552L1487 551.500H1620L1620.500 617L1621 520L1621.500 606L1622.500 537L1623 588L1624 551L1624.500 576L1625.500 557L1627 566L1629 562L1632 564L1636 564.500H1749" stroke="#f41414" />
      <path d="M1296 540V605M1297.500 550V590M1459 530V565M1621 535V600M1622.500 548V585" stroke="#f41414" strokeWidth="2" />
      <circle cx="1167" cy="328" r="2.500" stroke="#c050c0" />
      <path d="M1159 111H1176L1167.500 119Z" fill="#c03cd0" />
      <path d="M1159 111H1176L1174 113H1161Z" fill="#4cc4e0" />
      <path d="M1166 112H1169V114H1167V116H1169" stroke="#111" />
    </svg>
  );
}

function CursorRow({ name }: { name: string }) {
  return (
    <div className="flex h-[17px] items-center">
      <span className="w-[21px] pl-px">{name}</span>
      <button type="button" aria-label={`${name} left`} className={btnOff + "size-[14px]"}><svg width="9" height="8" viewBox="0 0 9 8"><path d="M0 4L4 0V3H9V5H4V8Z" fill="#000" /></svg></button>
      <button type="button" aria-label={`${name} right`} className={btnOff + "ml-[3px] size-[14px]"}><svg width="9" height="8" viewBox="0 0 9 8"><path d="M9 4L5 0V3H0V5H5V8Z" fill="#000" /></svg></button>
    </div>
  );
}

type GroupProps = Kids & { id: string; title: string; scale: string; posLabel: string; pos: string; className: string };

function ChannelGroup({ id, title, scale, posLabel, pos, className, children }: GroupProps) {
  return (
    <fieldset className={"h-[79px] flex-none border border-r-0 border-[#dcdcdc] pr-1 pl-0.5 " + className}>
      <legend className="ml-1 px-0.5 leading-[14px]">{title}</legend>
      <div className="flex h-[19px] items-center justify-between">
        <label htmlFor={id + "-scale"} className="pt-0.5">Scale:</label>
        <input id={id + "-scale"} defaultValue={scale} className={field + "h-[19px] w-[102px] pl-[5px]"} />
      </div>
      <div className="mt-0.5 flex h-[20px] items-center justify-between">
        <label htmlFor={id + "-pos"}>{posLabel}</label>
        <input id={id + "-pos"} defaultValue={pos} className={field + "h-[20px] w-[77px] pl-[5px]"} />
      </div>
      <div className="mt-[3px] flex h-[18px] items-stretch">{children}</div>
    </fieldset>
  );
}

const readout = [
  ["126.051 ms", "1.513 mV", "55.150 V"],
  ["126.051 ms", "1.513 mV", "55.150 V"],
  ["0.000 s", "0.000 V", "0.000 V"],
];

function Oscilloscope() {
  return (
    <section className="absolute top-[78px] left-[1156px] flex w-[672px] flex-col border border-[#8c8c8c] bg-[#f0f0f0] text-[11px] text-black shadow-[2px_4px_12px_rgba(0,0,0,0.4)]">
      <WindowTitle title="Oscilloscope-XSC1" className="h-[30px] border-b border-[#5c5c5c]" />
      <ScopeScreen />
      <div className="flex h-[18px] items-center justify-between border-t border-[#666] px-1 pb-0.5">
        <svg width="6" height="8" viewBox="0 0 6 8" fill="none" stroke="#444" strokeWidth="1.600"><path d="M5 .5L1 4L5 7.500" /></svg>
        <div className="ml-auto h-[11px] w-[105px] bg-[#cdcdcd]" />
        <svg width="6" height="8" viewBox="0 0 6 8" fill="none" stroke="#444" strokeWidth="1.600" className="ml-[6px]"><path d="M1 .5L5 4L1 7.500" /></svg>
      </div>
      <div className="flex h-[66px] items-start">
        <div className="flex h-[58px] w-[58px] flex-none flex-col border border-[#a8a8a8] border-l-white pt-[5px] pl-0.5 leading-[14px]">
          <CursorRow name="T1" />
          <CursorRow name="T2" />
          <span className="mt-0.5 pl-px">T2-T1</span>
        </div>
        <div className="ml-px h-[58px] w-[442px] flex-none border border-t-2 border-[#dcdcdc] border-t-[#6e6e6e] border-l-[#6e6e6e] bg-white">
          <table className="table-fixed border-collapse text-center leading-[13px]">
            <thead>
              <tr>
                <th scope="col" className="w-[72px] p-0 font-normal">Time</th>
                <th scope="col" className="w-[82px] p-0 font-normal">Channel_A</th>
                <th scope="col" className="w-[80px] p-0 font-normal">Channel_B</th>
              </tr>
            </thead>
            <tbody>
              {readout.map((row, i) => (
                <tr key={i}>{row.map((c, j) => <td key={j} className="p-0 whitespace-pre">{c}</td>)}</tr>
              ))}
            </tbody>
          </table>
        </div>
        <div className="mt-[7px] ml-2 flex flex-none flex-col gap-[6px]">
          <button type="button" className={btnOff + "h-[21px] w-[61px]"}>Reverse</button>
          <button type="button" className={btnOff + "h-[21px] w-[61px]"}>Save</button>
        </div>
        <label className="mt-[48px] ml-[8px] flex items-center gap-1 leading-[14px]">Ext. trigger<input type="radio" name="ext" className={radio} /></label>
      </div>
      <div className="flex items-start pb-0.5">
        <ChannelGroup id="tb" title="Timebase" scale="2 ms/Div" posLabel="X pos.(Div):" pos="0" className="w-[160px]">
          <button type="button" className={btnOn + "ml-1 w-[31px]"}>Y/T</button>
          <button type="button" className={btnOff + "ml-[2px] w-[34px]"}>Add</button>
          <button type="button" className={btnOff + "ml-[4px] w-[34px]"}>B/A</button>
          <button type="button" className={btnOff + "ml-[2px] w-[35px]"}>A/B</button>
        </ChannelGroup>
        <ChannelGroup id="cha" title="Channel A" scale="50 mV/Div" posLabel="Y pos.(Div):" pos="-1" className="w-[161px]">
          <button type="button" className={btnOn + "ml-0.5 w-[31px]"}>AC</button>
          <button type="button" className={btnOff + "ml-[2px] w-[32px]"}>0</button>
          <button type="button" className={btnOff + "ml-[2px] w-[33px]"}>DC</button>
          <input type="radio" defaultChecked aria-label="Channel A input" className={radio + "mr-[5px] ml-auto"} />
        </ChannelGroup>
        <ChannelGroup id="chb" title="Channel B" scale="50  V/Div" posLabel="Y pos.(Div):" pos="0" className="w-[160px]">
          <button type="button" className={btnOff + "ml-px w-[30px]"}>AC</button>
          <button type="button" className={btnOff + "ml-[2px] w-[28px]"}>0</button>
          <button type="button" className={btnOn + "ml-[2px] w-[31px]"}>DC</button>
          <button type="button" className={btnOff + "ml-[2px] w-[22px]"}>-</button>
          <input type="radio" defaultChecked aria-label="Channel B input" className={radio + "mt-0.5 ml-auto"} />
        </ChannelGroup>
        <fieldset className="h-[79px] w-[187px] flex-none border border-[#dcdcdc] pl-[3px]">
          <legend className="ml-0.5 px-0.5 leading-[14px]">Trigger</legend>
          <div className="flex h-[22px] items-center">
            <span className="w-[44px]">Edge:</span>
            <button type="button" aria-label="Rising edge" className={btnOn + "h-[16px] w-[22px]"}><svg width="10" height="10" viewBox="0 0 10 10" fill="none" stroke="#111"><path d="M0 9.500H5.500V1.500H10M3 5.500H8" /></svg></button>
            <button type="button" aria-label="Falling edge" className={btnOff + "ml-[2px] h-[16px] w-[22px]"}><svg width="10" height="10" viewBox="0 0 10 10" fill="none" stroke="#111"><path d="M0 1.500H5.500V9.500H10M3 5.500H8" /></svg></button>
            <button type="button" className={btnOn + "ml-[5px] h-[18px] w-[24px]"}>A</button>
            <button type="button" disabled className={btnDead + "ml-[2px] h-[18px] w-[23px]"}>B</button>
            <button type="button" disabled className={btnDead + "ml-[2px] h-[18px] w-[28px]"}>Ext</button>
          </div>
          <div className="mt-px flex h-[20px] items-stretch">
            <label htmlFor="level" className="flex w-[44px] items-center pb-1">Level:</label>
            <input id="level" defaultValue="0" className={field + "w-[99px] pl-[5px]"} />
            <input aria-label="Level unit" defaultValue="V" className={field + "w-[32px] pl-[7px]"} />
          </div>
          <div className="mt-px flex h-[18px] items-stretch gap-[2px]">
            <button type="button" className={btnOff + "w-[44px]"}>Single</button>
            <button type="button" className={btnOff + "w-[49px]"}>Normal</button>
            <button type="button" className={btnOff + "w-[37px]"}>Auto</button>
            <button type="button" className={btnOn + "w-[40px]"}>None</button>
          </div>
        </fieldset>
      </div>
      <Grip />
    </section>
  );
}

/* ---------- page ---------- */

function SidePanel() {
  return (
    <aside className="flex w-[30px] flex-none flex-col border-r border-white">
      <div className="flex h-[25px] items-start gap-1 pt-[5px]">
        <div className="h-[14px] w-[3px] border-r border-b border-[#8a8a8a]" />
        <button type="button" aria-label="Close panel" className="flex size-[13px] items-center justify-center border border-white border-r-[#777] border-b-[#777]">
          <svg width="7" height="7" viewBox="0 0 7 7" stroke="#111" strokeWidth="1.500" aria-hidden="true"><path d="M.5 .5L6.500 6.500M6.500 .5L.5 6.500" /></svg>
        </button>
      </div>
      <div className="flex w-[20px] flex-1 flex-col border-r-2 border-b-2 border-[#8c8c8c] pb-0.5 pl-[5px]">
        <svg width="10" height="26" viewBox="0 0 10 26" fill="none" aria-hidden="true"><path d="M0 7L6 10V20H0Z" fill="#e8e020" stroke="#8a8400" /><path d="M0 13H3Q6 14 3 17H0M5 11V20" stroke="#111" /></svg>
        <div className="flex w-[12px] flex-1 flex-col overflow-hidden border border-[#8c8c8c] bg-white text-right text-[11px] leading-[18px]">
          <span className="-ml-2 text-[#222a5a]">AN</span><span>T</span><span className="-ml-2 text-[#222a5a]">AN</span><span className="bg-[#eee]">T</span>
          <span className="mt-auto bg-[#eee] text-center">·</span>
        </div>
      </div>
      <button type="button" aria-label="Next tab" className="mt-1 mb-2 ml-[3px] flex size-4 items-center justify-center border border-[#b8b8b8]">
        <svg width="4" height="7" viewBox="0 0 4 7" aria-hidden="true"><path d="M0 0L4 3.500L0 7Z" fill="#111" /></svg>
      </button>
    </aside>
  );
}

export default function App() {
  return (
    <div className="relative flex h-screen w-full flex-col overflow-hidden bg-[#f0f0f0] font-['Noto_Sans',sans-serif] text-[12px] text-black">
      <header className="flex h-[23px] flex-none items-center bg-white px-[2px] font-['Roboto',sans-serif]">
        <svg width="16" height="16" viewBox="0 0 16 16" aria-hidden="true">
          <rect x="1" y="1" width="14" height="14" fill="#3c3c78" />
          <path d="M1 4H8M1 8H10M4 12H15M9 1V7H15M12 8V15M5 5V15" stroke="#b8b0dc" strokeWidth="1.400" fill="none" />
        </svg>
        <h1 className="ml-[5px] whitespace-pre">TRANZISZTOROS   60V 1A - Multisim - [TRANZISZTOROS   60V 1A]</h1>
        <button type="button" aria-label="Minimise" className="mr-[30px] ml-auto flex h-4 w-3 items-center justify-center"><span className="h-px w-[10px] bg-black" /></button>
      </header>

      <nav className="flex h-[25px] flex-none items-center border-y border-[#9c9c9c] pl-1 font-['Roboto',sans-serif]">
        <SheetIcon />
        <div className="ml-px flex">
          {menus.map(([a, b, c]) => (
            <button type="button" key={b + c} className="px-[6px]">{a}<u className="underline-offset-2">{b}</u>{c}</button>
          ))}
        </div>
      </nav>

      <div role="toolbar" className="flex h-[27px] flex-none items-stretch overflow-hidden border-b border-[#a8a8a8]"><StandardTools /></div>
      <div role="toolbar" className="flex h-[28px] flex-none items-stretch overflow-hidden border-b border-[#6e6e6e]"><ComponentTools /></div>

      <main className="flex min-h-0 flex-1 items-stretch">
        <SidePanel />
        <div className="mb-[5px] flex min-w-0 flex-1 flex-col border-l border-[#6e6e6e] pt-[4px]">
          <div className="ml-[5px] flex min-h-0 flex-1 overflow-hidden border-t-2 border-l-2 border-[#7a7a7a] bg-[#ababab]">
            <Schematic />
          </div>
          <div className="h-[6px] flex-none border-t border-white" />
          <div className="flex h-[23px] flex-none items-start text-[11px]">
            <div className="h-px w-[4px] bg-[#555]" />
            <button type="button" className="flex h-[21px] w-[204px] flex-none items-center gap-1 rounded-b-[3px] border border-[#555] pl-0.5 whitespace-pre"><SheetIcon />TRANZISZTOROS   60V 20A   STAT</button>
            <button type="button" className="flex h-[22px] w-[164px] flex-none items-center gap-1 rounded-b-[3px] border border-t-0 border-[#333] pl-[3px] whitespace-pre"><SheetIcon />TRANZISZTOROS   60V 1A</button>
            <div className="h-px flex-1 bg-[#555]" />
          </div>
        </div>
      </main>

      <footer className="flex h-[13px] flex-none items-start border-t border-[#777] pt-[5px]">
        <button type="button" aria-label="Close pane" className="ml-[5px] flex h-3 w-[13px] items-center justify-center border-r border-[#777]">
          <svg width="6" height="6" viewBox="0 0 7 7" stroke="#111" strokeWidth="1.500" aria-hidden="true"><path d="M.5 .5L6.500 6.500M6.500 .5L.5 6.500" /></svg>
        </button>
        <div className="mt-0.5 ml-[7px] h-3 flex-1 border-t border-l border-[#777] bg-white" />
      </footer>

      <FunctionGenerator />
      <Oscilloscope />
      <div className="pointer-events-none absolute top-[948px] left-[1544px] text-[19px] leading-[24px] whitespace-nowrap text-[#b4b4b4]">Aktiválja a Windowst</div>
    </div>
  );
}
